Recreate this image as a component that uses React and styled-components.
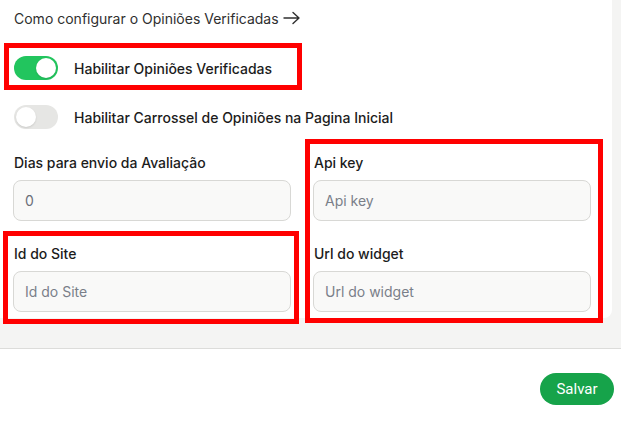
import React from 'react';
import styled, { createGlobalStyle } from 'styled-components';

const GlobalStyle = createGlobalStyle`
  body {
    margin: 0;
    background: #f4f4f3;
    font-family: Inter, "Noto Sans", sans-serif;
  }
`;

const Page = styled.div`
  width: 621px;
  height: 424px;
  display: flex;
  flex-direction: column;
  overflow: hidden;
`;

const Card = styled.div`
  position: relative;
  width: 612px;
  box-sizing: border-box;
  background: #fff;
  border-bottom-right-radius: 8px;
  padding: 0 21px 6px 13px;
  display: flex;
  flex-direction: column;
`;

const HelpLink = styled.a`
  height: 36px;
  display: flex;
  align-items: center;
  gap: 4px;
  padding-left: 1px;
  font-size: 14px;
  color: #2f2f2f;
  text-decoration: none;
`;

const ToggleList = styled.div`
  display: flex;
  flex-direction: column;
  gap: 25px;
  margin-top: 20px;
`;

const ToggleRow = styled.label`
  display: flex;
  align-items: center;
  gap: 16px;
  height: 24px;
  padding-left: 1px;
  font-size: 14px;
  font-weight: 500;
  color: #1c1c1c;
`;

const Switch = styled.span`
  position: relative;
  width: 44px;
  height: 24px;
  border-radius: 12px;
  background: ${p => (p.on ? '#22c55e' : '#e6e6e4')};
  flex-shrink: 0;

  &::after {
    content: '';
    position: absolute;
    top: 2px;
    left: ${p => (p.on ? '22px' : '2px')};
    width: 20px;
    height: 20px;
    border-radius: 50%;
    background: #fff;
    box-shadow: 0 1px 2px rgba(0, 0, 0, 0.12);
  }
`;

const Fields = styled.div`
  display: grid;
  grid-template-columns: 278px 278px;
  column-gap: 22px;
  row-gap: 23px;
  margin-top: 24px;
`;

const Field = styled.div`
  position: relative;
  display: flex;
  flex-direction: column;
`;

const Label = styled.span`
  height: 20px;
  line-height: 20px;
  padding-left: 1px;
  font-size: 14px;
  font-weight: 500;
  color: #1c1c1c;
  margin-bottom: 7px;
`;

const Input = styled.input`
  height: 41px;
  box-sizing: border-box;
  border: 1px solid #d8d8d5;
  border-radius: 8px;
  background: #f9f9f8;
  padding: 0 11px;
  font-family: Inter, "Noto Sans", sans-serif;
  font-size: 14px;
  color: #6b6f78;
  outline: none;

  &::placeholder {
    color: #7a7f89;
  }
`;

const Marker = styled.div`
  position: absolute;
  box-sizing: border-box;
  border: 5px solid #ff0000;
  pointer-events: none;
  top: ${p => p.top}px;
  left: ${p => p.left}px;
  width: ${p => p.w}px;
  height: ${p => p.h}px;
  z-index: 2;
`;

const Footer = styled.div`
  flex: 1;
  margin-top: 30px;
  background: #fff;
  border-top: 1px solid #dcdcda;
  display: flex;
  justify-content: flex-end;
  align-items: flex-start;
  padding: 24px 7px 0 0;
`;

const SaveButton = styled.button`
  height: 32px;
  width: 74px;
  padding: 0;
  border: none;
  border-radius: 16px;
  background: #16a34a;
  color: #fff;
  font-family: Roboto, "Noto Sans", sans-serif;
  font-size: 15px;
  font-weight: 400;
  cursor: pointer;
`;

const Arrow = () => (
  <svg width="18" height="14" viewBox="0 0 18 14" fill="none" stroke="#2f2f2f" strokeWidth="1.4" strokeLinecap="round" strokeLinejoin="round">
    <path d="M1 7h15M10 1.5 16 7l-6 5.5" />
  </svg>
);

export default function App() {
  return (
    <Page>
      <GlobalStyle />
      <Card>
        <HelpLink href="#">
          Como configurar o Opiniões Verificadas <Arrow />
        </HelpLink>
        <ToggleList>
          <ToggleRow>
            <Switch on />
            Habilitar Opiniões Verificadas
          </ToggleRow>
          <ToggleRow>
            <Switch />
            Habilitar Carrossel de Opiniões na Pagina Inicial
          </ToggleRow>
        </ToggleList>
        <Fields>
          <Field>
            <Label>Dias para envio da Avaliação</Label>
            <Input defaultValue="0" />
          </Field>
          <Field>
            <Label>Api key</Label>
            <Input placeholder="Api key" />
          </Field>
          <Field>
            <Label>Id do Site</Label>
            <Input placeholder="Id do Site" />
          </Field>
          <Field>
            <Label>Url do widget</Label>
            <Input placeholder="Url do widget" />
          </Field>
        </Fields>
        <Marker top={43} left={4} w={298} h={47} />
        <Marker top={231} left={3} w={296} h={93} />
        <Marker top={139} left={305} w={298} h={184} />
      </Card>
      <Footer>
        <SaveButton>Salvar</SaveButton>
      </Footer>
    </Page>
  );
}
